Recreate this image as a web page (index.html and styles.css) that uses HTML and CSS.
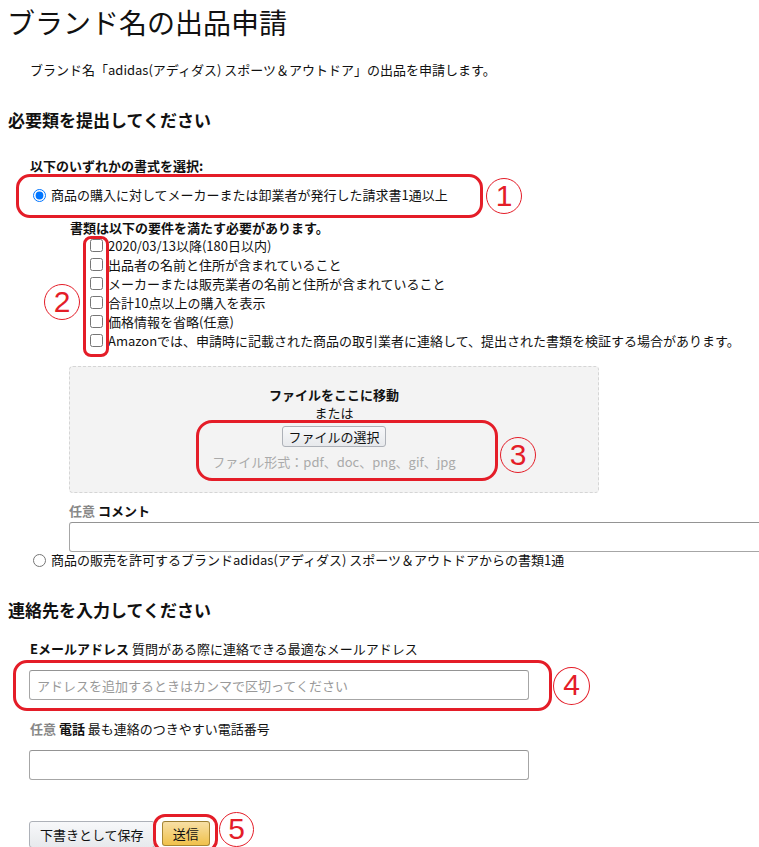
FILE: index.html
```html
<!DOCTYPE html>
<html lang="ja">
<head>
<meta charset="UTF-8">
<meta name="viewport" content="width=device-width, initial-scale=1.0">
<title>ブランド名の出品申請</title>
<link rel="stylesheet" href="styles.css">
</head>
<body>
<div class="page">
  <h1 class="title">ブランド名の出品申請</h1>
  <p class="intro">ブランド名「adidas(アディダス) スポーツ＆アウトドア」の出品を申請します。</p>

  <h2 class="section first">必要類を提出してください</h2>
  <p class="field-label">以下のいずれかの書式を選択:</p>
  <label class="radio-row"><input type="radio" name="doc" checked>商品の購入に対してメーカーまたは卸業者が発行した請求書1通以上</label>

  <p class="req-title">書類は以下の要件を満たす必要があります。</p>
  <ul class="checklist">
    <li><label><input type="checkbox">2020/03/13以降(180日以内)</label></li>
    <li><label><input type="checkbox">出品者の名前と住所が含まれていること</label></li>
    <li><label><input type="checkbox">メーカーまたは販売業者の名前と住所が含まれていること</label></li>
    <li><label><input type="checkbox">合計10点以上の購入を表示</label></li>
    <li><label><input type="checkbox">価格情報を省略(任意)</label></li>
    <li><label><input type="checkbox">Amazonでは、申請時に記載された商品の取引業者に連絡して、提出された書類を検証する場合があります。</label></li>
  </ul>

  <div class="dropzone">
    <p class="drop-title">ファイルをここに移動</p>
    <p class="drop-or">または</p>
    <button type="button" class="btn file-btn">ファイルの選択</button>
    <p class="drop-types">ファイル形式：pdf、doc、png、gif、jpg</p>
  </div>

  <p class="comment-label"><span class="optional">任意</span> コメント</p>
  <textarea class="comment"></textarea>

  <label class="radio-row second"><input type="radio" name="doc">商品の販売を許可するブランドadidas(アディダス) スポーツ＆アウトドアからの書類1通</label>

  <h2 class="section contact">連絡先を入力してください</h2>
  <p class="contact-label"><b>Eメールアドレス</b> 質問がある際に連絡できる最適なメールアドレス</p>
  <input type="text" class="text-input" placeholder="アドレスを追加するときはカンマで区切ってください">
  <p class="contact-label phone"><span class="optional">任意</span> <b>電話</b> 最も連絡のつきやすい電話番号</p>
  <input type="text" class="text-input">

  <div class="actions">
    <button type="button" class="btn draft-btn">下書きとして保存</button>
    <button type="button" class="btn submit-btn">送信</button>
  </div>

  <!-- annotation marks -->
  <div class="mark box1"></div>
  <div class="num n1">1</div>
  <div class="mark box2"></div>
  <div class="num n2">2</div>
  <div class="mark box3"></div>
  <div class="num n3">3</div>
  <div class="mark box4"></div>
  <div class="num n4">4</div>
  <div class="mark box5"></div>
  <div class="num n5">5</div>
</div>
</body>
</html>
```

FILE: styles.css
```css
body {
  margin: 0;
  padding: 0;
  font-family: "Noto Sans CJK JP", "Noto Sans", sans-serif;
  font-size: 13px;
  color: #111;
  background: #fff;
  overflow: hidden;
}

.page {
  position: relative;
  height: 847px;
}

p {
  margin: 0;
}

.title {
  margin: 0;
  padding-left: 7px;
  font-size: 28px;
  font-weight: normal;
  line-height: 44px;
}

.intro {
  margin: 16px 0 0 30px;
  line-height: 20px;
}

.section {
  margin: 28px 0 0 8px;
  font-size: 17px;
  line-height: 24px;
  font-weight: bold;
}

.field-label {
  margin: 25px 0 0 30px;
  line-height: 18px;
  font-weight: bold;
}

.radio-row {
  display: flex;
  align-items: center;
  margin: 10px 0 0 33px;
  line-height: 20px;
}

.radio-row input {
  width: 13px;
  height: 13px;
  margin: 0 5px 0 0;
}

.radio-row.second {
  margin-top: 0;
  line-height: 16px;
}

.req-title {
  margin: 15px 0 0 70px;
  line-height: 16px;
  font-weight: bold;
}

.checklist {
  list-style: none;
  margin: 0 0 0 90px;
  padding: 0;
}

.checklist li {
  line-height: 19px;
}

.checklist label {
  display: flex;
  align-items: center;
}

.checklist input {
  width: 13px;
  height: 13px;
  margin: 0 5px 0 0;
}

.dropzone {
  box-sizing: border-box;
  width: 530px;
  height: 127px;
  margin: 16px 0 0 69px;
  padding-top: 19px;
  background: #f3f3f3;
  border: 1px dashed #d5d5d5;
  border-radius: 4px;
  text-align: center;
}

.drop-title {
  line-height: 18px;
  font-weight: bold;
}

.drop-or {
  line-height: 18px;
}

.drop-types {
  margin-top: 6px;
  line-height: 18px;
  color: #aaa;
}

.btn {
  font-family: inherit;
  font-size: 13px;
  color: #111;
  border-radius: 3px;
  cursor: pointer;
}

.file-btn {
  height: 21px;
  margin-top: 4px;
  padding: 0 5px;
  line-height: 19px;
  border: 1px solid #adb1b8;
  background: linear-gradient(#f7f8fa, #e7e9ec);
}

.comment-label {
  margin: 9px 0 0 69px;
  line-height: 18px;
  font-weight: bold;
}

.optional {
  color: #888;
}

.comment {
  display: block;
  box-sizing: border-box;
  width: 700px;
  height: 30px;
  margin: 2px 0 0 69px;
  border: 1px solid #a6a6a6;
  border-top-color: #949494;
  border-radius: 3px;
  resize: none;
}

.section.contact {
  margin-top: 30px;
}

.contact-label {
  margin: 18px 0 0 30px;
  line-height: 18px;
}

.contact-label.phone {
  margin-top: 20px;
}

.contact-label.phone .optional {
  font-weight: bold;
}

.text-input {
  display: block;
  box-sizing: border-box;
  width: 500px;
  height: 30px;
  margin: 12px 0 0 29px;
  padding: 0 7px;
  font-family: inherit;
  font-size: 13px;
  border: 1px solid #a6a6a6;
  border-top-color: #949494;
  border-radius: 3px;
}

.text-input::placeholder {
  color: #999;
}

.actions {
  display: flex;
  gap: 7px;
  margin: 41px 0 0 29px;
}

.draft-btn {
  height: 27px;
  padding: 0 10px;
  border: 1px solid #adb1b8;
  background: linear-gradient(#f7f8fa, #e7e9ec);
}

.submit-btn {
  height: 25px;
  padding: 0 10px;
  border: 1px solid #a88734;
  border-top-color: #9c7e31;
  background: linear-gradient(#f7dfa5, #f0c14b);
}

/* red annotation overlay */
.mark {
  position: absolute;
  box-sizing: border-box;
  border: 3px solid #e41d28;
  border-radius: 14px;
}

.box1 { left: 16px; top: 174px; width: 467px; height: 44px; }
.box2 { left: 83px; top: 236px; width: 26px; height: 121px; border-radius: 8px; }
.box3 { left: 196px; top: 420px; width: 302px; height: 61px; border-radius: 16px; }
.box4 { left: 13px; top: 660px; width: 539px; height: 51px; border-radius: 14px; }
.box5 { left: 153px; top: 814px; width: 65px; height: 38px; border-radius: 12px; }

.num {
  position: absolute;
  box-sizing: border-box;
  width: 36px;
  height: 36px;
  border: 1.5px solid #e41d28;
  border-radius: 50%;
  color: #e41d28;
  font-family: "Liberation Sans", sans-serif;
  font-size: 30px;
  line-height: 33px;
  text-align: center;
}

.n1 { left: 486px; top: 178px; }
.n2 { left: 44px; top: 284px; }
.n3 { left: 500px; top: 437px; }
.n4 { left: 553px; top: 667px; width: 37px; height: 38px; }
.n5 { left: 219px; top: 812px; width: 35px; height: 35px; line-height: 32px; }
```
